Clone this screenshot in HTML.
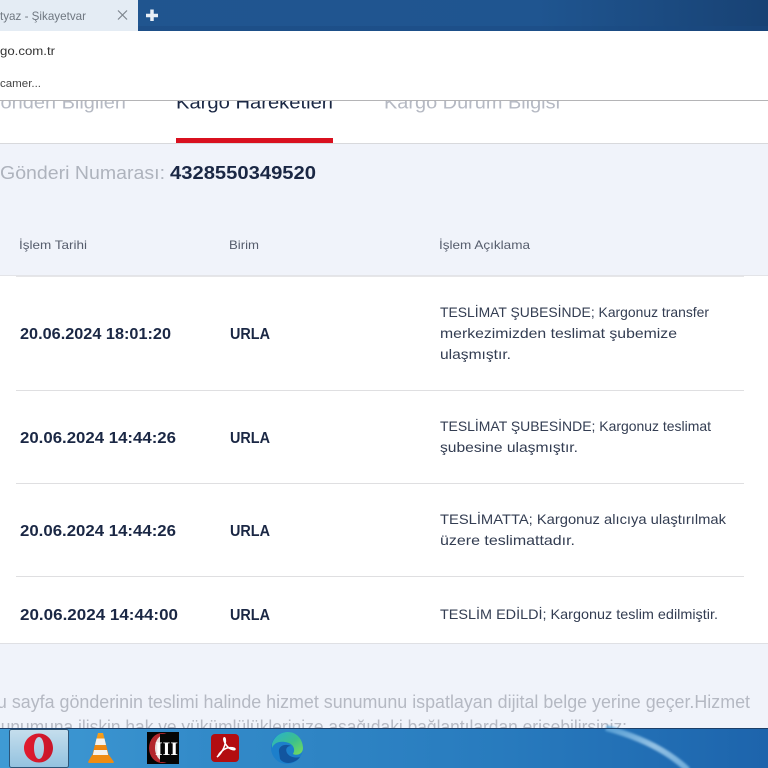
<!DOCTYPE html>
<html lang="tr"><head><meta charset="utf-8"><title>Kargo Hareketleri</title>
<style>
html,body{margin:0;padding:0;width:768px;height:768px;overflow:hidden;background:#f0f3fa}
svg{display:block}
text{font-family:"Liberation Sans",sans-serif;white-space:pre}
.b{font-weight:700;fill:#1a2744}
.d{font-size:14px;fill:#333d52}
.g{fill:#b5b9c3}
.h{font-size:12px;fill:#555c6c}
.c{font-size:12px;fill:#333}
</style></head><body>
<svg width="768" height="768" viewBox="0 0 768 768" xmlns="http://www.w3.org/2000/svg">
<defs>
<linearGradient id="top" x1="0" x2="1" y1="0" y2="0"><stop offset="0" stop-color="#21558f"/><stop offset=".7" stop-color="#1f5590"/><stop offset="1" stop-color="#184274"/></linearGradient>
<linearGradient id="bar2" x1="0" x2="1" y1="0" y2="0"><stop offset="0" stop-color="#3f9ad4"/><stop offset=".25" stop-color="#338bc9"/><stop offset=".65" stop-color="#287bbe"/><stop offset="1" stop-color="#1d64ac"/></linearGradient>
<linearGradient id="btn" x1="0" x2="0" y1="0" y2="1"><stop offset="0" stop-color="#c5deed"/><stop offset="1" stop-color="#93c2df"/></linearGradient>
<linearGradient id="cone" x1="0" x2="0" y1="0" y2="1"><stop offset="0" stop-color="#f7a11b"/><stop offset="1" stop-color="#e8770c"/></linearGradient>
<linearGradient id="edge" x1="0" x2="1" y1="0" y2="1"><stop offset="0" stop-color="#2ab0d0"/><stop offset=".55" stop-color="#3cc08c"/><stop offset="1" stop-color="#78dc5a"/></linearGradient>
<linearGradient id="op" x1="0" x2="1" y1="0" y2="0"><stop offset="0" stop-color="#e11b2e"/><stop offset="1" stop-color="#c8162a"/></linearGradient>
<linearGradient id="sw" x1="0" x2="1" y1="0" y2="1"><stop offset="0" stop-color="#5fa6da"/><stop offset=".5" stop-color="#a8d0ec"/><stop offset="1" stop-color="#7db8e2"/></linearGradient>
<filter id="soft" x="-10%" y="-10%" width="120%" height="120%"><feGaussianBlur stdDeviation="1"/></filter>
</defs>

<rect width="768" height="768" fill="#f0f3fa"/>

<!-- page content -->
<rect y="100" width="768" height="43" fill="#fff"/>
<text x="-15" y="108.500" font-size="18" class="g" textLength="141" lengthAdjust="spacingAndGlyphs">Gönderi Bilgileri</text>
<text x="176" y="108.500" font-size="18" fill="#1a2744" textLength="157" lengthAdjust="spacingAndGlyphs">Kargo Hareketleri</text>
<text x="384" y="108.500" font-size="18" class="g" textLength="176" lengthAdjust="spacingAndGlyphs">Kargo Durum Bilgisi</text>
<rect x="176" y="138" width="157" height="5" fill="#d9101f"/>
<rect y="143" width="768" height="1" fill="#d8d9dc"/>

<text x="0" y="179" font-size="18" fill="#aeb3bd" textLength="165" lengthAdjust="spacingAndGlyphs">Gönderi Numarası:</text>
<text x="170" y="179" font-size="18" class="b" textLength="146" lengthAdjust="spacingAndGlyphs">4328550349520</text>

<text x="19" y="249" class="h" textLength="68" lengthAdjust="spacingAndGlyphs">İşlem Tarihi</text>
<text x="229" y="249" class="h" textLength="30" lengthAdjust="spacingAndGlyphs">Birim</text>
<text x="439" y="249" class="h" textLength="91" lengthAdjust="spacingAndGlyphs">İşlem Açıklama</text>

<rect y="275" width="768" height="369" fill="#fff"/>
<rect y="275" width="768" height="1" fill="#e3e4e8"/>
<rect x="16" y="276" width="728" height="1" fill="#e6e6e8"/>
<rect x="16" y="390" width="728" height="1" fill="#dfdfe1"/>
<rect x="16" y="483" width="728" height="1" fill="#dfdfe1"/>
<rect x="16" y="576" width="728" height="1" fill="#dfdfe1"/>
<rect y="643" width="768" height="1" fill="#dfe0e4"/>

<text x="20" y="339" font-size="16" class="b" textLength="151" lengthAdjust="spacingAndGlyphs">20.06.2024 18:01:20</text>
<text x="230" y="339" font-size="16" class="b" textLength="40" lengthAdjust="spacingAndGlyphs">URLA</text>
<text x="440" y="317" class="d" textLength="269" lengthAdjust="spacingAndGlyphs">TESLİMAT ŞUBESİNDE; Kargonuz transfer</text>
<text x="440" y="338" class="d" textLength="237" lengthAdjust="spacingAndGlyphs">merkezimizden teslimat şubemize</text>
<text x="440" y="359" class="d" textLength="71" lengthAdjust="spacingAndGlyphs">ulaşmıştır.</text>

<text x="20" y="443" font-size="16" class="b" textLength="156" lengthAdjust="spacingAndGlyphs">20.06.2024 14:44:26</text>
<text x="230" y="443" font-size="16" class="b" textLength="40" lengthAdjust="spacingAndGlyphs">URLA</text>
<text x="440" y="431" class="d" textLength="271" lengthAdjust="spacingAndGlyphs">TESLİMAT ŞUBESİNDE; Kargonuz teslimat</text>
<text x="440" y="452" class="d" textLength="138" lengthAdjust="spacingAndGlyphs">şubesine ulaşmıştır.</text>

<text x="20" y="536" font-size="16" class="b" textLength="156" lengthAdjust="spacingAndGlyphs">20.06.2024 14:44:26</text>
<text x="230" y="536" font-size="16" class="b" textLength="40" lengthAdjust="spacingAndGlyphs">URLA</text>
<text x="440" y="524" class="d" textLength="286" lengthAdjust="spacingAndGlyphs">TESLİMATTA; Kargonuz alıcıya ulaştırılmak</text>
<text x="440" y="545" class="d" textLength="135" lengthAdjust="spacingAndGlyphs">üzere teslimattadır.</text>

<text x="20" y="620" font-size="16" class="b" textLength="158" lengthAdjust="spacingAndGlyphs">20.06.2024 14:44:00</text>
<text x="230" y="620" font-size="16" class="b" textLength="40" lengthAdjust="spacingAndGlyphs">URLA</text>
<text x="440" y="619" class="d" textLength="278" lengthAdjust="spacingAndGlyphs">TESLİM EDİLDİ; Kargonuz teslim edilmiştir.</text>

<text x="-15" y="708" font-size="18" class="g" textLength="765" lengthAdjust="spacingAndGlyphs">Bu sayfa gönderinin teslimi halinde hizmet sunumunu ispatlayan dijital belge yerine geçer.Hizmet</text>
<text x="-8" y="733" font-size="18" class="g" textLength="635" lengthAdjust="spacingAndGlyphs">sunumuna ilişkin hak ve yükümlülüklerinize aşağıdaki bağlantılardan erişebilirsiniz:</text>

<!-- browser chrome -->
<rect width="768" height="31" fill="url(#top)"/>
<rect y="26" width="768" height="5" fill="#1a4a80" opacity=".45"/>
<rect width="138" height="31" fill="#e4ecf4"/>
<text x="0" y="20" font-size="12" fill="#6f7780" textLength="86" lengthAdjust="spacingAndGlyphs">tyaz - Şikayetvar</text>
<path d="M118 10.500l9 9M127 10.500l-9 9" stroke="#7d858c" stroke-width="1.200" fill="none"/>
<path d="M152 9.500v11.500M146 15.500h12" stroke="#e8eff6" stroke-width="3.500" fill="none"/>
<rect y="31" width="768" height="69" fill="#fff"/>
<text x="0" y="55" class="c" textLength="55" lengthAdjust="spacingAndGlyphs">go.com.tr</text>
<text x="0" y="87" font-size="11" fill="#444" textLength="41" lengthAdjust="spacingAndGlyphs">camer...</text>
<rect y="100" width="768" height="1" fill="#b4b4b6"/>

<!-- taskbar -->
<rect y="728" width="768" height="40" fill="url(#bar2)"/>
<path d="M606 728C640 737 668 751 688 770" stroke="url(#sw)" stroke-width="6" fill="none" opacity=".85" filter="url(#soft)"/>
<rect y="728" width="768" height="1" fill="#1c3f68"/>

<rect x="9.500" y="729.500" width="59" height="38" rx="2" fill="url(#btn)" stroke="#2c5578"/>
<path fill-rule="evenodd" fill="url(#op)" d="M39 733.500c8 0 14 6.500 14 14.500s-6 14.500-14 14.500-15-6.500-15-14.500 7-14.500 15-14.500zM39 737c-3 0-5 5-5 11s2 11 5 11 5-5 5-11-2-11-5-11z"/>

<path d="M98 733h5l6.500 25h-18z" fill="url(#cone)"/>
<path d="M96.500 738.500h8l1.500 6.500h-11z" fill="#f4f2ee"/>
<path d="M94 750h13l1.300 5.500h-15.600z" fill="#f4f2ee"/>
<path d="M92 755h17l5 7a1.500 1.500 0 0 1-1 1H89a1.500 1.500 0 0 1-1-1z" fill="#ef8c12"/>

<rect x="147" y="732" width="32" height="32" fill="#050505"/>
<ellipse cx="162" cy="748" rx="13" ry="15" fill="#b3262c"/>
<ellipse cx="164" cy="748" rx="9" ry="13" fill="#e9e2e0"/>
<rect x="160" y="734" width="19" height="28" fill="#050505"/>
<text x="155" y="755" font-size="19" font-weight="700" fill="#fff" style="font-family:'Liberation Serif',serif" textLength="23" lengthAdjust="spacingAndGlyphs">III</text>

<rect x="211" y="734" width="28" height="28" rx="4" fill="#b30d10"/>
<path d="M217 757c3-2 7-8 8-13 1-4 0-7-1-6-1 2 2 9 7 11 3 1 4 1 4 0s-4-2-8-1c-3 1-7 4-9 8z" stroke="#fff" stroke-width="1.500" fill="none"/>

<circle cx="287" cy="748" r="16" fill="#1c7fcb"/>
<path d="M272 744C275 735 282 732 288 732C297 732 303 740 303 748C303 754 297 756 293 754C296 749 293 743 285 742C279 741 274 743 272 748Z" fill="url(#edge)"/>
<path d="M279 752C278 746 285 743 291 746C287 746 285 749 287 753C290 758 297 758 300 757C295 764 284 765 280 759Z" fill="#12559f"/>
</svg>
</body></html>
